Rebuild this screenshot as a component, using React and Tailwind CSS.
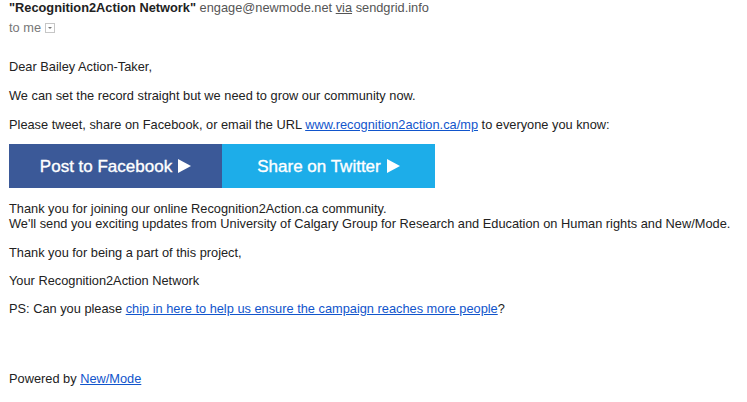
function Arrow() {
  return (
    <svg width="13" height="14" viewBox="0 0 13 14" className="ml-[6px]">
      <path d="M0 0 L13 7 L0 14 Z" fill="#fff" />
    </svg>
  );
}

export default function App() {
  return (
    <div className="w-[747px] h-[402px] bg-white px-[9px] text-[12.8px] leading-[15px] text-[#222] font-['Liberation_Sans',Arial,sans-serif] overflow-hidden">
      <div className="whitespace-nowrap">
        <span className="font-bold text-[#222]">"Recognition2Action Network"</span>{" "}
        <span className="text-[#555]">engage@newmode.net</span>{" "}
        <span className="text-[#555] underline">via</span>{" "}
        <span className="text-[#555]">sendgrid.info</span>
      </div>
      <div className="mt-[5px] flex items-center gap-[4px] text-[#777]">
        <span>to me</span>
        <span className="flex h-[10px] w-[10px] items-center justify-center border border-[#c6c6c6] bg-white">
          <svg width="6" height="4" viewBox="0 0 6 4">
            <path d="M1 1 L5 1 L3 3 Z" fill="#777" />
          </svg>
        </span>
      </div>

      <p className="mt-[24px]">Dear Bailey Action-Taker,</p>
      <p className="mt-[14px]">We can set the record straight but we need to grow our community now.</p>
      <p className="mt-[14px] whitespace-nowrap">
        Please tweet, share on Facebook, or email the URL{" "}
        <a className="text-[#15c] underline">www.recognition2action.ca/mp</a> to everyone you know:
      </p>

      <div className="mt-[12px] flex">
        <a className="flex h-[44px] w-[213px] items-center justify-center bg-[#3b5998] text-[17px] text-white [-webkit-text-stroke:0.35px_#fff]">
          Post to Facebook
          <Arrow />
        </a>
        <a className="flex h-[44px] w-[213px] items-center justify-center bg-[#1dade9] text-[17px] text-white [-webkit-text-stroke:0.35px_#fff]">
          Share on Twitter
          <Arrow />
        </a>
      </div>

      <p className="mt-[13px] whitespace-nowrap">
        Thank you for joining our online Recognition2Action.ca community.
        <br />
        We'll send you exciting updates from University of Calgary Group for Research and Education on Human rights and New/Mode.
      </p>
      <p className="mt-[14px]">Thank you for being a part of this project,</p>
      <p className="mt-[13px]">Your Recognition2Action Network</p>
      <p className="mt-[13px] whitespace-nowrap">
        PS: Can you please{" "}
        <a className="text-[#15c] underline">chip in here to help us ensure the campaign reaches more people</a>?
      </p>

      <p className="mt-[55px]">
        Powered by <a className="text-[#15c] underline">New/Mode</a>
      </p>
    </div>
  );
}
